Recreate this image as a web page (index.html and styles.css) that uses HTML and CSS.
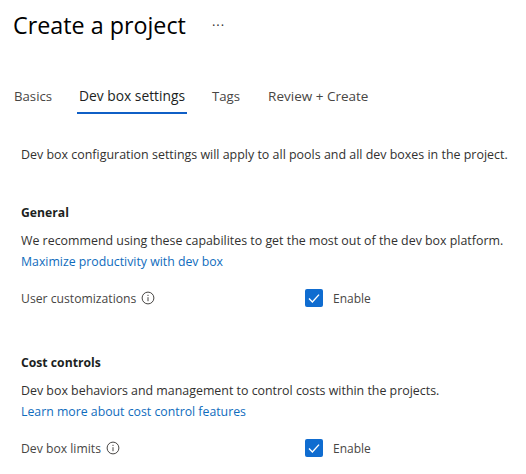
FILE: index.html
```html
<!DOCTYPE html>
<html lang="en">
<head>
    <meta charset="UTF-8">
    <title>Create a project</title>
    <link rel="stylesheet" href="styles.css">
</head>
<body>
    <div class="header">
        <h1 class="title">Create a project</h1>
        <span class="more">&middot;&middot;&middot;</span>
    </div>
    <div class="tabs">
        <div class="tab">Basics</div>
        <div class="tab active">Dev box settings</div>
        <div class="tab">Tags</div>
        <div class="tab review">Review + Create</div>
    </div>
    <p class="intro">Dev box configuration settings will apply to all pools and all dev boxes in the project.</p>

    <div class="section general">
        <h2 class="section-title">General</h2>
        <p class="desc">We recommend using these capabilites to get the most out of the dev box platform.</p>
        <a class="link" href="#">Maximize productivity with dev box</a>
        <div class="field">
            <div class="label">User customizations
                <svg class="info" viewBox="0 0 14 14"><circle cx="7" cy="7" r="5.9"/><path d="M7 6.2v4M7 3.8v1.2"/></svg>
            </div>
            <div class="check">
                <span class="box"><svg viewBox="0 0 18 18"><path d="M4 9.5l3.4 3.4L14 5.6"/></svg></span>
                Enable
            </div>
        </div>
    </div>

    <div class="section cost">
        <h2 class="section-title">Cost controls</h2>
        <p class="desc">Dev box behaviors and management to control costs within the projects.</p>
        <a class="link" href="#">Learn more about cost control features</a>
        <div class="field">
            <div class="label">Dev box limits
                <svg class="info" viewBox="0 0 14 14"><circle cx="7" cy="7" r="5.9"/><path d="M7 6.2v4M7 3.8v1.2"/></svg>
            </div>
            <div class="check">
                <span class="box"><svg viewBox="0 0 18 18"><path d="M4 9.5l3.4 3.4L14 5.6"/></svg></span>
                Enable
            </div>
        </div>
    </div>
</body>
</html>
```

FILE: styles.css
```css
*{
    padding: 0;
    margin: 0;
    box-sizing: border-box;
}
body{
    font-family: "Open Sans", "Noto Sans", sans-serif;
    font-size: 12.45px;
    color: #323130;
    background: #fff;
    overflow: hidden;
}
.header{
    display: flex;
    align-items: center;
    padding: 8px 0 0 13px;
    height: 42px;
}
.title{
    font-size: 23.3px;
    font-weight: 500;
    color: #000;
    line-height: 32px;
}
.more{
    margin-left: 26px;
    font-size: 13px;
    letter-spacing: 1px;
    color: #323130;
}
.tabs{
    display: flex;
    margin-top: 33px;
    padding-left: 14px;
    height: 39px;
}
.tab{
    font-size: 13.2px;
    line-height: 42px;
    margin-right: 25px;
    color: #484644;
}
.tab.active{
    color: #201f1e;
    font-size: 13.8px;
    border-bottom: 2px solid #0f5fc6;
    padding: 0 2px;
}
.tab.review{
    margin-left: 3px;
    font-size: 13.5px;
}
.intro{
    margin: 32px 0 0 21px;
    line-height: 18px;
    white-space: nowrap;
}
.section{
    margin-left: 21px;
}
.general{
    margin-top: 40px;
}
.cost{
    margin-top: 44px;
}
.section-title{
    font-size: 12.2px;
    font-weight: 700;
    color: #201f1e;
    line-height: 18px;
}
.desc{
    margin-top: 10px;
    font-size: 12.4px;
    line-height: 18px;
    white-space: nowrap;
}
.link{
    display: block;
    margin-top: 3px;
    font-size: 12.3px;
    line-height: 18px;
    color: #0f6cbd;
    text-decoration: none;
}
.field{
    display: flex;
    align-items: center;
    margin-top: 15px;
    height: 24px;
}
.label{
    display: flex;
    align-items: center;
    gap: 5px;
    width: 284px;
    font-size: 12.2px;
    color: #484644;
}
.info{
    width: 14px;
    height: 14px;
    fill: none;
    stroke: #484644;
    stroke-width: 1;
}
.check{
    display: flex;
    align-items: center;
    gap: 10px;
    font-size: 12px;
    color: #484644;
}
.box{
    display: block;
    width: 18px;
    height: 18px;
    border-radius: 2px;
    background: #0f6cd0;
}
.box svg{
    display: block;
    width: 18px;
    height: 18px;
    fill: none;
    stroke: #fff;
    stroke-width: 1.4;
}
```
